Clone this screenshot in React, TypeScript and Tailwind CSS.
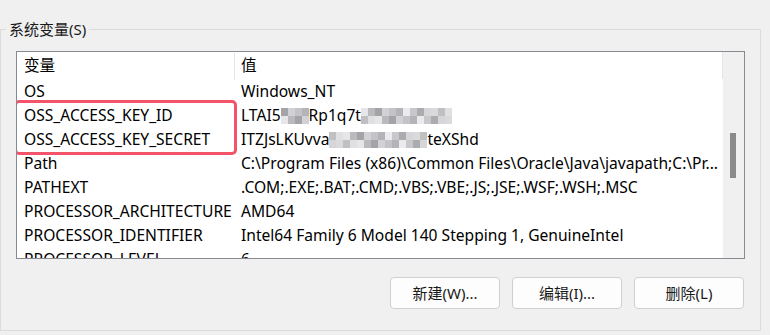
import React from "react";

const font = { fontFamily: '"Noto Sans", "Noto Sans CJK SC", sans-serif' };

const shades = [
  "bg-[#c8c8ca]",
  "bg-[#a4a4a8]",
  "bg-[#dadadc]",
  "bg-[#b4b4b8]",
  "bg-[#e6e6e8]",
  "bg-[#acacb0]",
  "bg-[#d2d2d5]",
  "bg-[#c0c0c3]",
  "bg-[#ebebed]",
  "bg-[#bababd]",
  "bg-[#d6d6d8]",
  "bg-[#c4c4c7]",
  "bg-[#e0e0e2]",
];

function Mosaic({ cols, seed }: { cols: number; seed: number }) {
  const rows = [0, 1];
  return (
    <span className="inline-flex flex-col align-middle">
      {rows.map((r) => (
        <span key={r} className="flex">
          {Array.from({ length: cols }).map((_, i) => (
            <span
              key={i}
              className={"block w-[7px] h-[8px] " + shades[(i * 5 + r * 3 + seed) % shades.length]}
            />
          ))}
        </span>
      ))}
    </span>
  );
}

const rows: { name: string; value: React.ReactNode }[] = [
  { name: "OS", value: "Windows_NT" },
  {
    name: "OSS_ACCESS_KEY_ID",
    value: (
      <span className="flex items-center">
        LTAI5<Mosaic cols={4} seed={1} />Rp1q7t<Mosaic cols={13} seed={4} />
      </span>
    ),
  },
  {
    name: "OSS_ACCESS_KEY_SECRET",
    value: (
      <span className="flex items-center">
        ITZJsLKUvva<Mosaic cols={14} seed={7} />teXShd
      </span>
    ),
  },
  { name: "Path", value: "C:\\Program Files (x86)\\Common Files\\Oracle\\Java\\javapath;C:\\Pr..." },
  { name: "PATHEXT", value: ".COM;.EXE;.BAT;.CMD;.VBS;.VBE;.JS;.JSE;.WSF;.WSH;.MSC" },
  { name: "PROCESSOR_ARCHITECTURE", value: "AMD64" },
  { name: "PROCESSOR_IDENTIFIER", value: "Intel64 Family 6 Model 140 Stepping 1, GenuineIntel" },
  { name: "PROCESSOR_LEVEL", value: "6" },
];

function Btn({ label }: { label: string }) {
  return (
    <button className="w-[110px] h-[32px] rounded-[4px] border border-[#d0d0d0] bg-[#fdfdfd] text-[15px] text-[#1a1a1a] flex items-center justify-center">
      {label}
    </button>
  );
}

export default function App() {
  return (
    <div className="w-[770px] h-[335px] bg-[#f0f0f0] overflow-hidden text-black" style={font}>
      <div className="pt-[29px]">
        <div className="relative w-[761px] h-[302px] border border-[#dcdcdc] px-[15px] pt-[21px]">
          <div className="absolute left-[5px] top-[-12px] bg-[#f0f0f0] px-[3px] text-[15px] leading-[22px] text-[#1a1a1a]">
            系统变量(S)
          </div>
          <div className="relative w-[729px] h-[208px] border border-[#868a91] bg-white flex overflow-hidden text-[15.6px]">
            <div className="flex-1 overflow-hidden">
              <div className="flex h-[27px] items-center">
                <div className="w-[218px] h-full pl-[7px] flex items-center border-r border-[#e5e5e5] mt-[1px]">
                  变量
                </div>
                <div className="flex-1 h-full pl-[6px] flex items-center border-r border-[#e5e5e5]">
                  值
                </div>
              </div>
              <div className="pt-[1px]">
                {rows.map((r) => (
                  <div key={r.name} className="flex h-[24px] items-center whitespace-nowrap">
                    <div className="w-[218px] pl-[7px]">{r.name}</div>
                    <div className="flex-1 pl-[6px] overflow-hidden">{r.value}</div>
                  </div>
                ))}
              </div>
            </div>
            <div className="w-[21px] h-full bg-[#f0f0f0] relative">
              <div className="absolute left-[7px] top-[81px] w-[6px] h-[45px] bg-[#8a8a8a]" />
            </div>
            <div className="absolute left-[-3px] top-[48px] w-[223px] h-[55px] rounded-[5px] border-[3px] border-[#f4546a]" />
          </div>
          <div className="flex justify-end gap-[12px] mt-[18px] pr-[1px]">
            <Btn label="新建(W)..." />
            <Btn label="编辑(I)..." />
            <Btn label="删除(L)" />
          </div>
        </div>
      </div>
    </div>
  );
}
